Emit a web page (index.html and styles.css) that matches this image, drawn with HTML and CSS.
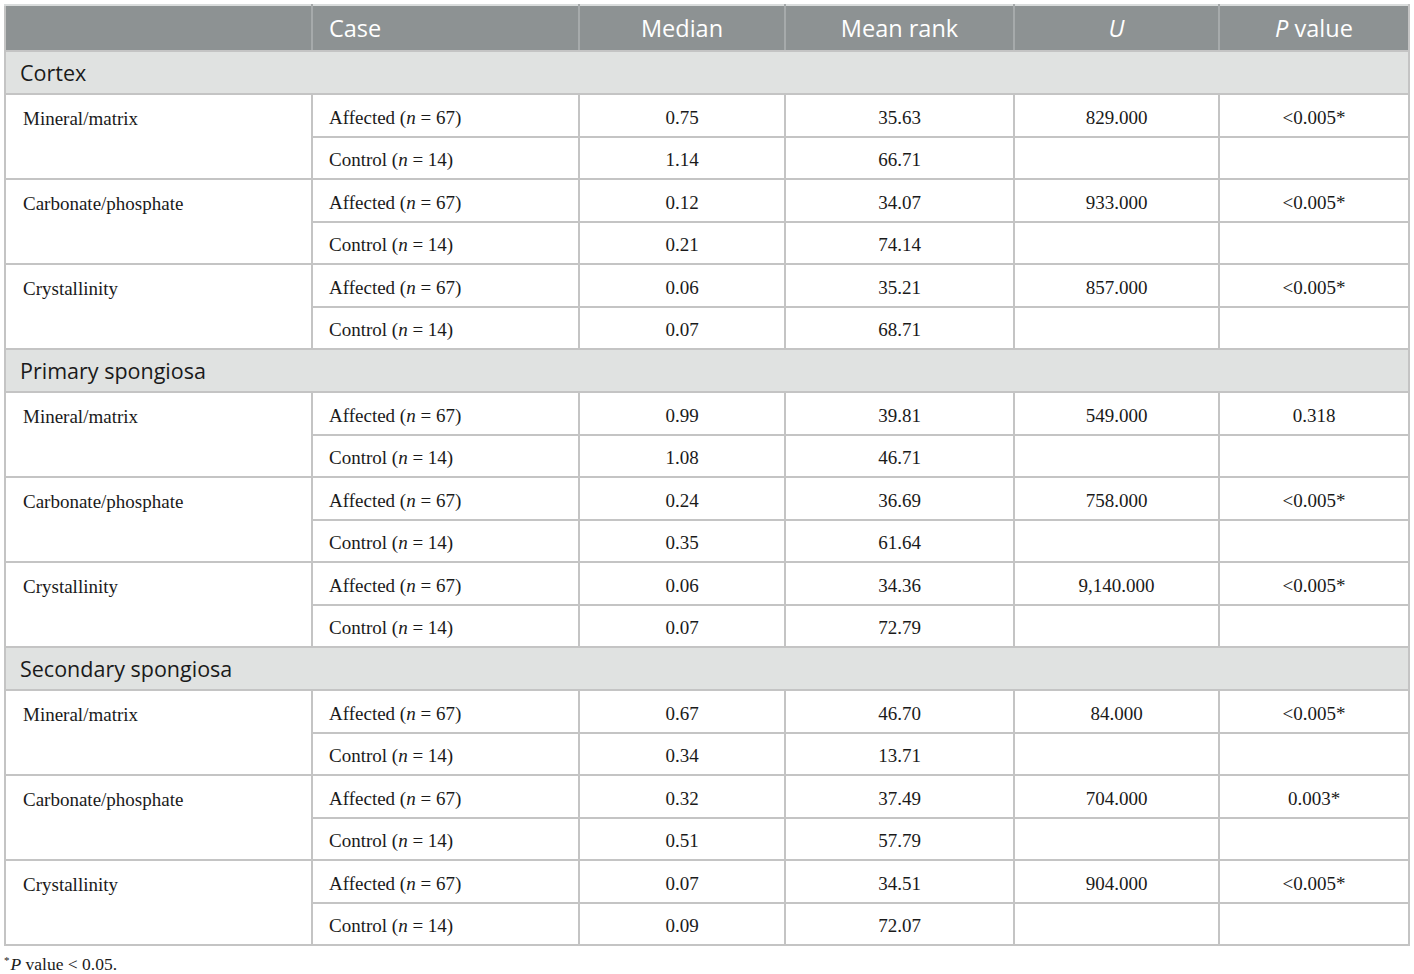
FILE: index.html
```html
<!DOCTYPE html>
<html>
<head>
<meta charset="utf-8">
<link rel="stylesheet" href="styles.css">
</head>
<body>
<div class="wrap">
<table class="data">
  <colgroup>
    <col class="c1"><col class="c2"><col class="c3"><col class="c4"><col class="c5"><col class="c6">
  </colgroup>
  <thead>
    <tr class="head">
      <th></th><th class="left">Case</th><th>Median</th><th>Mean rank</th><th><i>U</i></th><th><i>P</i> value</th>
    </tr>
  </thead>
  <tbody>
    <tr class="section"><td colspan="6">Cortex</td></tr>
    <tr><td class="label" rowspan="2">Mineral/matrix</td><td class="left">Affected (<i>n</i> = 67)</td><td>0.75</td><td>35.63</td><td>829.000</td><td>&lt;0.005*</td></tr>
    <tr><td class="left">Control (<i>n</i> = 14)</td><td>1.14</td><td>66.71</td><td></td><td></td></tr>
    <tr><td class="label" rowspan="2">Carbonate/phosphate</td><td class="left">Affected (<i>n</i> = 67)</td><td>0.12</td><td>34.07</td><td>933.000</td><td>&lt;0.005*</td></tr>
    <tr><td class="left">Control (<i>n</i> = 14)</td><td>0.21</td><td>74.14</td><td></td><td></td></tr>
    <tr><td class="label" rowspan="2">Crystallinity</td><td class="left">Affected (<i>n</i> = 67)</td><td>0.06</td><td>35.21</td><td>857.000</td><td>&lt;0.005*</td></tr>
    <tr><td class="left">Control (<i>n</i> = 14)</td><td>0.07</td><td>68.71</td><td></td><td></td></tr>

    <tr class="section"><td colspan="6">Primary spongiosa</td></tr>
    <tr><td class="label" rowspan="2">Mineral/matrix</td><td class="left">Affected (<i>n</i> = 67)</td><td>0.99</td><td>39.81</td><td>549.000</td><td>0.318</td></tr>
    <tr><td class="left">Control (<i>n</i> = 14)</td><td>1.08</td><td>46.71</td><td></td><td></td></tr>
    <tr><td class="label" rowspan="2">Carbonate/phosphate</td><td class="left">Affected (<i>n</i> = 67)</td><td>0.24</td><td>36.69</td><td>758.000</td><td>&lt;0.005*</td></tr>
    <tr><td class="left">Control (<i>n</i> = 14)</td><td>0.35</td><td>61.64</td><td></td><td></td></tr>
    <tr><td class="label" rowspan="2">Crystallinity</td><td class="left">Affected (<i>n</i> = 67)</td><td>0.06</td><td>34.36</td><td>9,140.000</td><td>&lt;0.005*</td></tr>
    <tr><td class="left">Control (<i>n</i> = 14)</td><td>0.07</td><td>72.79</td><td></td><td></td></tr>

    <tr class="section"><td colspan="6">Secondary spongiosa</td></tr>
    <tr><td class="label" rowspan="2">Mineral/matrix</td><td class="left">Affected (<i>n</i> = 67)</td><td>0.67</td><td>46.70</td><td>84.000</td><td>&lt;0.005*</td></tr>
    <tr><td class="left">Control (<i>n</i> = 14)</td><td>0.34</td><td>13.71</td><td></td><td></td></tr>
    <tr><td class="label" rowspan="2">Carbonate/phosphate</td><td class="left">Affected (<i>n</i> = 67)</td><td>0.32</td><td>37.49</td><td>704.000</td><td>0.003*</td></tr>
    <tr><td class="left">Control (<i>n</i> = 14)</td><td>0.51</td><td>57.79</td><td></td><td></td></tr>
    <tr><td class="label" rowspan="2">Crystallinity</td><td class="left">Affected (<i>n</i> = 67)</td><td>0.07</td><td>34.51</td><td>904.000</td><td>&lt;0.005*</td></tr>
    <tr><td class="left">Control (<i>n</i> = 14)</td><td>0.09</td><td>72.07</td><td></td><td></td></tr>
  </tbody>
</table>
<p class="foot"><sup>*</sup><i>P</i> value &lt; 0.05.</p>
</div>
</body>
</html>
```

FILE: styles.css
```css
html, body {
  margin: 0;
  padding: 0;
  background: #ffffff;
}

.wrap {
  padding: 4px 0 0 4px;
}

.data {
  border-collapse: collapse;
  table-layout: fixed;
  width: 1404px;
  font-family: "Liberation Serif", "Times New Roman", serif;
  font-size: 19px;
  color: #1a1a1a;
}

.c1 { width: 307px; }
.c2 { width: 267px; }
.c3 { width: 206px; }
.c4 { width: 229px; }
.c5 { width: 205px; }
.c6 { width: 190px; }

.data td, .data th {
  border: 2px solid #c4c4c4;
  text-align: center;
  padding: 5px 16px 0 16px;
  height: 35.5px;
  line-height: 22px;
  vertical-align: middle;
}

.data td.left, .data th.left {
  text-align: left;
}

.data td.label {
  text-align: left;
  vertical-align: top;
  padding-top: 13px;
  padding-left: 17px;
}

.head th {
  background: #8d9293;
  color: #ffffff;
  font-family: "Open Sans", "Liberation Sans", sans-serif;
  font-weight: 400;
  font-size: 23.5px;
  height: 44px;
  padding-top: 0;
  border-top-color: #d9dcdc;
  border-left-color: #a6aaab;
  border-right-color: #a6aaab;
  border-bottom-color: #c4c4c4;
}

.head th:first-child {
  border-left-color: #c4c4c4;
}

.head th:last-child {
  border-right-color: #c4c4c4;
}

.section td {
  background: #e0e2e1;
  text-align: left;
  font-family: "Open Sans", "Liberation Sans", sans-serif;
  font-size: 21.5px;
  color: #1a1a1a;
  padding-left: 14px;
  padding-top: 0;
  height: 41px;
}

.foot {
  margin: 8px 0 0 0;
  font-family: "Liberation Serif", "Times New Roman", serif;
  font-size: 17.5px;
  color: #1a1a1a;
}

.foot sup {
  font-size: 11px;
  vertical-align: 6px;
  margin-right: 1px;
}
```
